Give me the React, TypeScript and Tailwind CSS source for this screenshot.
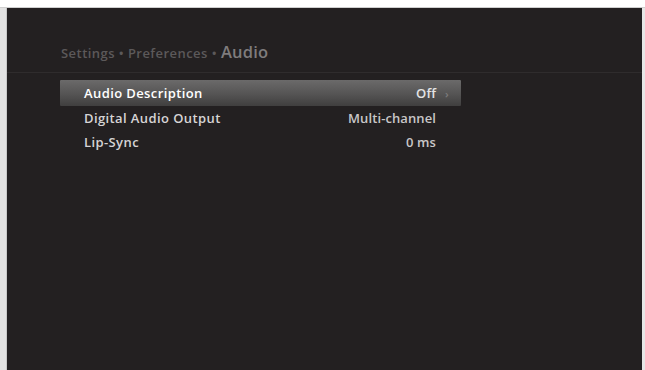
import React from "react";

const rows = [
  { label: "Audio Description", value: "Off", active: true },
  { label: "Digital Audio Output", value: "Multi-channel" },
  { label: "Lip-Sync", value: "0 ms" },
];

export default function App() {
  return (
    <div className="w-[645px] h-[370px] bg-[#f4f4f4] flex flex-col" style={{ fontFamily: '"Open Sans", "DejaVu Sans", sans-serif' }}>
      <div className="h-[8px] bg-white border-b border-[#cfcfcf]" />
      <div className="flex flex-1">
        <div className="w-[7px] bg-[#e2e2e2] border-r border-[#c8c8c8]" />
        <div className="flex-1 bg-[#232021] flex flex-col">
          <div className="h-[65px] flex items-end pl-[54px] pb-[10px] border-b border-[#2f2c2d]">
            <span className="text-[13px] font-semibold text-[#5c595a] tracking-[0.45px] leading-[18px]">Settings • Preferences •</span>
            <span className="text-[16.5px] font-semibold text-[#7f7c7d] ml-[4px] leading-[20px] tracking-[0.2px]">Audio</span>
          </div>
          <div className="pt-[7px] pl-[53px] w-[454px] flex flex-col">
            {rows.map((r) => (
              <div
                key={r.label}
                className={
                  "flex items-center pt-[2px] pl-[24px] pr-[25px] text-[13px] font-semibold tracking-[0.4px] " +
                  (r.active
                    ? "bg-gradient-to-b from-[#6b6a6a] via-[#575656] to-[#403f3f] rounded-[1px] h-[26px] text-white"
                    : "h-[24px] text-[#d6d4d5]")
                }
              >
                <span className="flex-1">{r.label}</span>
                <span className={"tracking-[0.1px] " + (r.active ? "text-[#e4e4e4]" : "text-[#c9c7c8]")}>{r.value}</span>
                {r.active ? (
                  <span className="relative left-[9px] w-0 text-[#7c7b7b] text-[11px]">›</span>
                ) : null}
              </div>
            ))}
          </div>
        </div>
        <div className="w-[3px] bg-[#e6e6e6]" />
      </div>
    </div>
  );
}
